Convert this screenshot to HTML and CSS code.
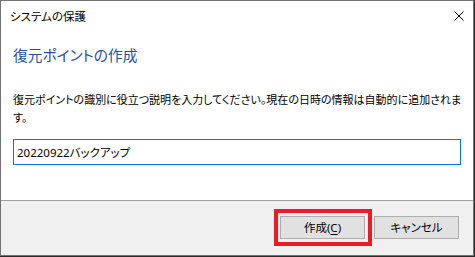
FILE: index.html
```html
<!DOCTYPE html>
<html lang="ja">
<head>
    <meta charset="UTF-8">
    <title>システムの保護</title>
    <link rel="stylesheet" href="styles.css">
</head>
<body>
    <div class="dialog">
        <div class="titlebar">
            <span class="title">システムの保護</span>
            <svg class="close" width="10" height="10" viewBox="0 0 10 10">
                <path d="M0.5 0.5 L9.5 9.5 M9.5 0.5 L0.5 9.5" stroke="#000" stroke-width="1" fill="none"/>
            </svg>
        </div>
        <div class="content">
            <h1>復元ポイントの作成</h1>
            <p class="description">復元ポイントの識別に役立つ説明を入力してください。現在の日時の情報は自動的に追加されます。</p>
            <input class="name-input" type="text" value="20220922バックアップ">
        </div>
        <div class="footer">
            <button class="btn btn-create">作成(<u>C</u>)</button>
            <button class="btn">キャンセル</button>
        </div>
    </div>
</body>
</html>
```
FILE: styles.css
```css
body {
    margin: 0;
    width: 475px;
    height: 257px;
    background-color: #2b2b2b;
    font-family: "Noto Sans", "Noto Sans CJK JP", sans-serif;
    font-feature-settings: "palt";
    overflow: hidden;
}
.dialog {
    width: 472px;
    height: 254px;
    border: 1px solid #737373;
    background-color: #fff;
    display: flex;
    flex-direction: column;
}
.titlebar {
    height: 30px;
    display: flex;
    align-items: center;
    justify-content: space-between;
    padding: 0 8px 0 9px;
}
.title {
    font-size: 11.5px;
    color: #000;
    margin-top: -1px;
}
.close {
    margin-right: 1px;
    margin-top: -1px;
}
.content {
    padding: 0 11px 0 12px;
    flex: 1;
}
h1 {
    margin: 13px 0 0 0;
    font-size: 14.7px;
    font-weight: normal;
    line-height: 22px;
    color: #2a4da6;
}
.description {
    margin: 25px -10px 0 0;
    font-size: 11px;
    line-height: 18px;
    color: #000;
}
.name-input {
    display: block;
    box-sizing: border-box;
    width: 448px;
    height: 26px;
    margin-top: 12px;
    padding: 0 3px;
    border: 1px solid #0078d7;
    outline: none;
    font-family: inherit;
    font-feature-settings: "palt";
    font-size: 11.5px;
    color: #000;
}
.footer {
    height: 39px;
    border-top: 1px solid #a0a0a0;
    background-color: #f0f0f0;
    display: flex;
    justify-content: flex-end;
    gap: 9px;
    padding: 15px 14px 0 0;
}
.btn {
    position: relative;
    box-sizing: border-box;
    width: 85px;
    height: 23px;
    background-color: #e1e1e1;
    border: 1px solid #adadad;
    font-family: inherit;
    font-feature-settings: "palt";
    font-size: 11.5px;
    color: #000;
    padding: 0;
    line-height: 20px;
}
.btn u {
    text-underline-offset: 2px;
}
/* 赤い強調枠 */
.btn-create::after {
    content: "";
    position: absolute;
    left: -7px;
    top: -8px;
    right: -8px;
    bottom: -8px;
    border: 4px solid #ea1c24;
}
```
